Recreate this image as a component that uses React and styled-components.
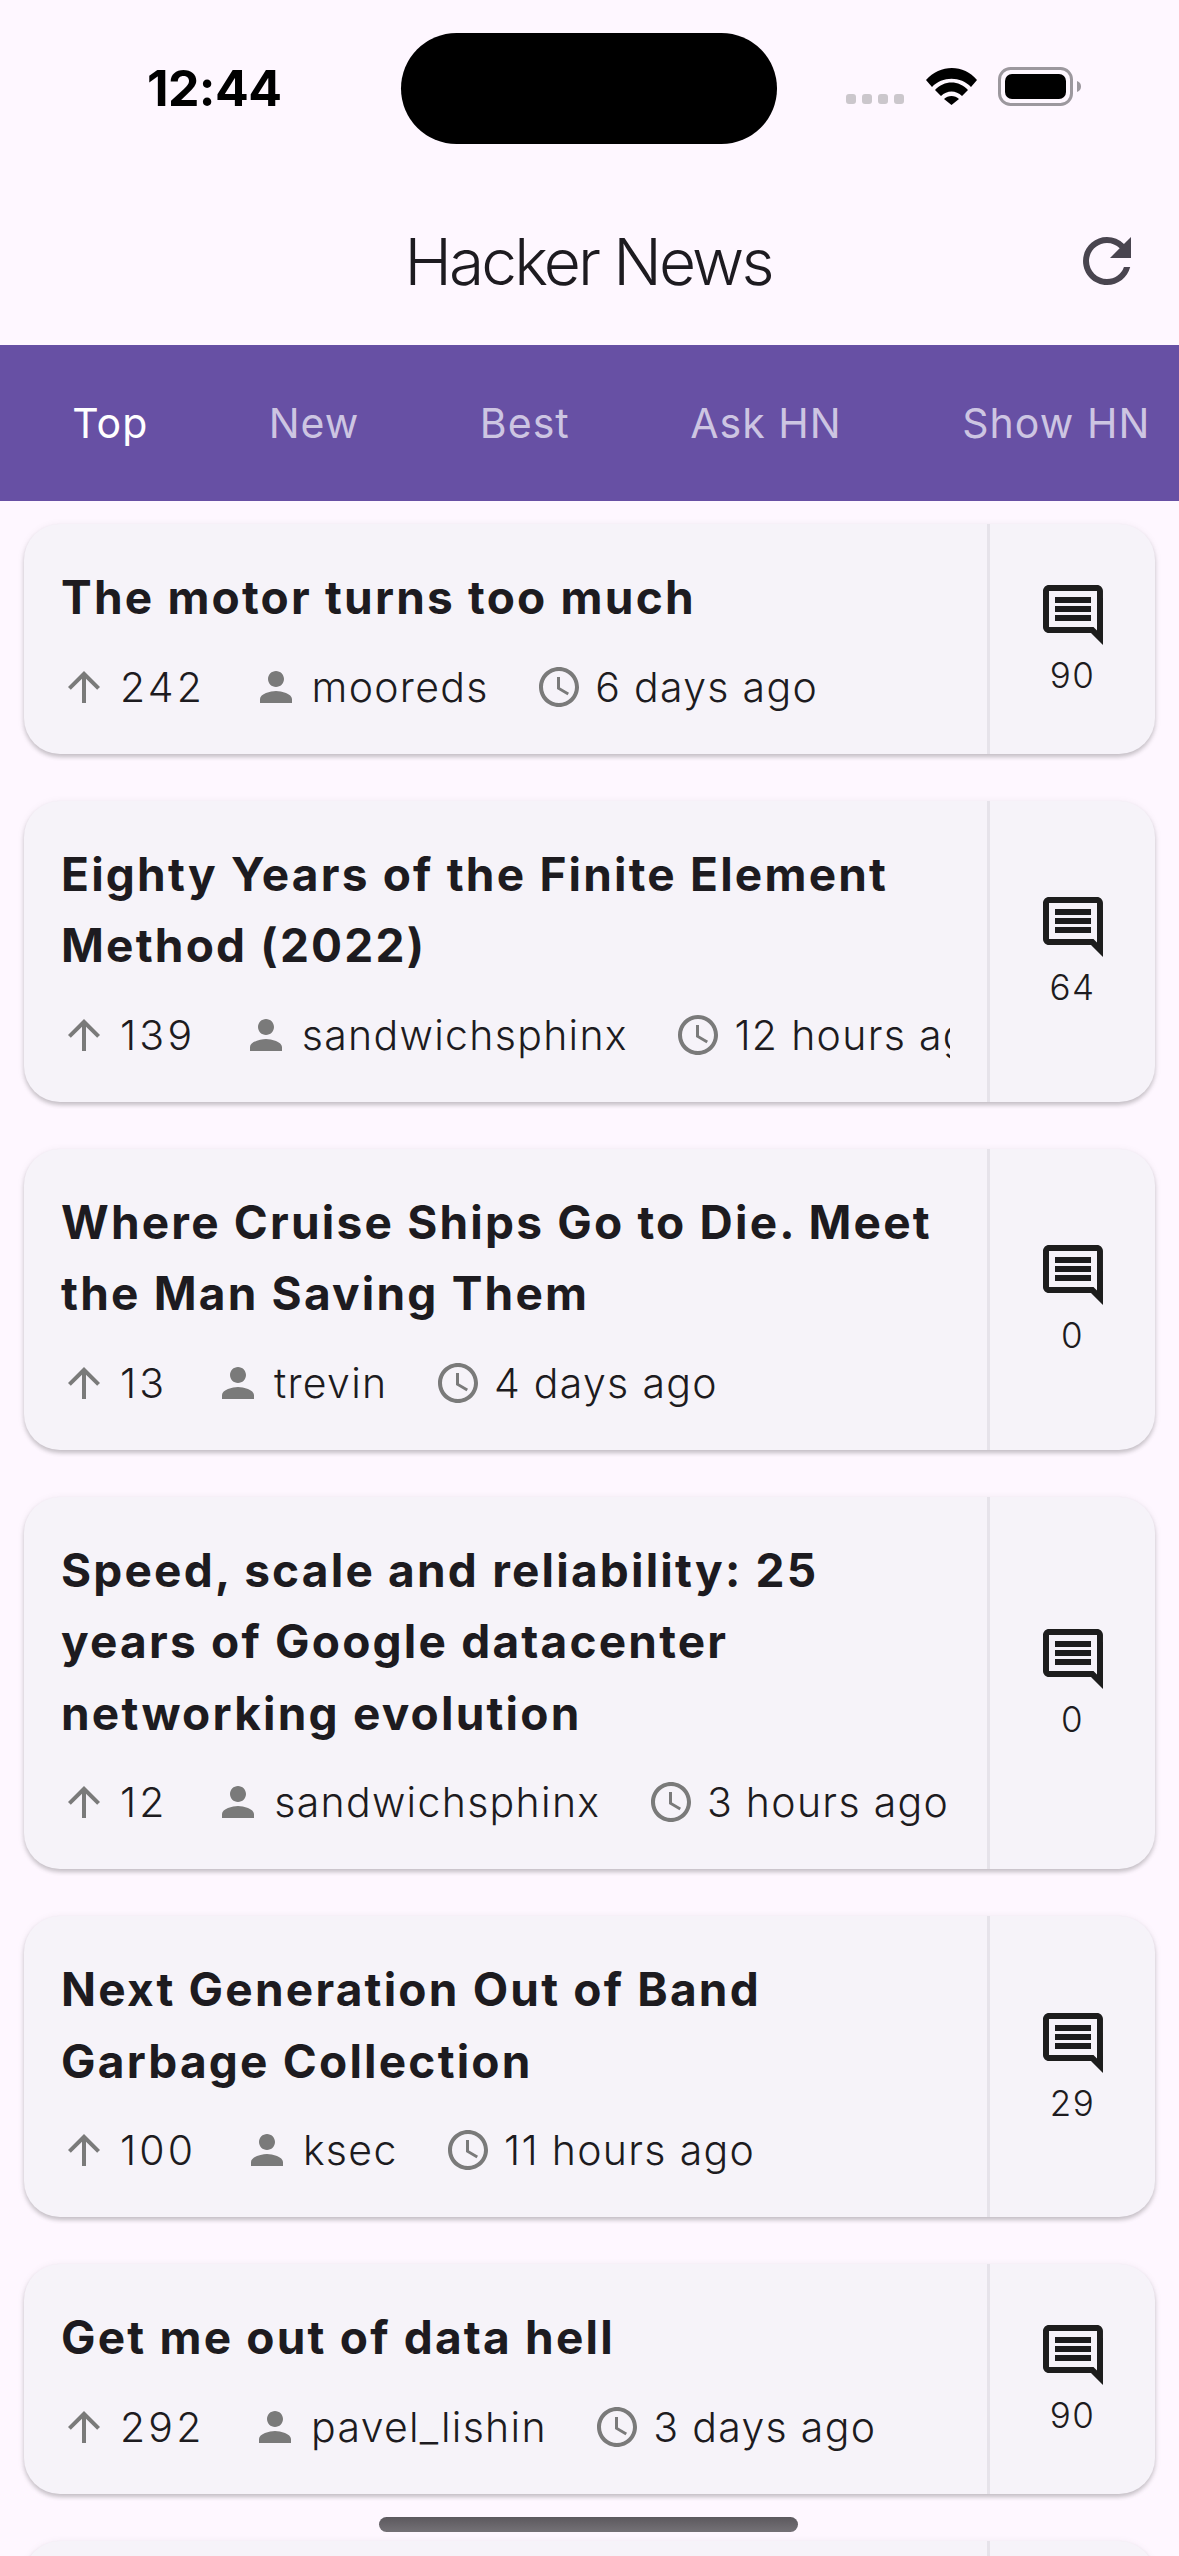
import styled, { createGlobalStyle } from "styled-components"
import { MdArrowUpward, MdPerson, MdAccessTime, MdOutlineComment, MdRefresh } from "react-icons/md"

const GlobalStyle = createGlobalStyle`
  html, body {
    margin: 0;
    height: 2556px;
    overflow: hidden;
    background: #FEF7FF;
  }
`
const Page = styled.div`
  width: 1179px;
  height: 2556px;
  overflow: hidden;
  position: relative;
  background: #FEF7FF;
  font-family: Inter, Roboto, sans-serif;
  color: #1D1B20;
`
const StatusBar = styled.div`
  height: 177px;
  box-sizing: border-box;
  padding-top: 33px;
  display: grid;
  grid-template-columns: 401px 376px 1fr;
  grid-template-rows: 111px;
`
const Clock = styled.div`
  padding: 30px 0 0 147px;
  font-weight: 700;
  font-size: 50px;
  line-height: 51px;
  letter-spacing: -0.6px;
  color: #000;
`
const Notch = styled.div`
  background: #000;
  border-radius: 56px;
`
const StatusIcons = styled.div`
  padding: 34px 0 0 69px;
`
const Toolbar = styled.header`
  height: 168px;
  display: grid;
  grid-template-columns: 1fr auto 1fr;
  align-items: center;
`
const AppTitle = styled.h1`
  grid-column: 2;
  margin: 0;
  padding: 2px 3px 0 0;
  font-weight: 350;
  font-size: 64px;
  line-height: 84px;
  letter-spacing: -2.85px;
`
const ToolbarAction = styled.div`
  justify-self: end;
  display: flex;
  padding-right: 36px;
  color: #49454F;
`
const Tabs = styled.nav`
  height: 156px;
  background: #6750A4;
  display: flex;
  align-items: center;
  padding-left: 12px;
  overflow: hidden;
`
const Tab = styled.div`
  flex: none;
  padding: 0 60.2px;
  font-size: 41px;
  font-weight: 400;
  letter-spacing: 1.05px;
  color: ${(props) => (props.$active ? "#FFFFFF" : "#CDC5E2")};
`
const List = styled.main`
  display: flex;
  flex-direction: column;
  gap: 47px;
  padding: 23px 24px 0 24px;
`
const Card = styled.article`
  display: flex;
  flex: none;
  background: #F6F3F9;
  border-radius: 36px;
  box-shadow: 0 3px 4px rgba(0, 0, 0, 0.2), 0 1px 9px rgba(0, 0, 0, 0.06);
  overflow: hidden;
`
const CardBody = styled.div`
  flex: 1;
  min-width: 0;
  padding: 38px 37px 36px 36px;
  border-right: 3px solid #E6E3EA;
`
const CardTitle = styled.h2`
  margin: 0 0 22px 1px;
  font-size: 46px;
  line-height: 71.5px;
  font-weight: 650;
  letter-spacing: 2.2px;
  color: #1D1B20;
`
const Meta = styled.div`
  display: flex;
  align-items: center;
  gap: 46.5px;
  white-space: nowrap;
  overflow: hidden;
  height: 62px;
`
const MetaItem = styled.span`
  display: flex;
  align-items: center;
  flex: none;
  gap: 12px;
  font-size: 41px;
  font-weight: 350;
  letter-spacing: 1.3px;
  color: #1D1B20;
  svg {
    color: #7A7A7A;
    flex: none;
  }
`
const Points = styled.span`
  letter-spacing: 3.2px;
`
const CommentBox = styled.div`
  flex: none;
  width: 165px;
  display: flex;
  flex-direction: column;
  align-items: center;
  justify-content: center;
  color: #1D1D1D;
`
const CommentCount = styled.span`
  font-size: 35px;
  font-weight: 350;
  line-height: 48px;
  letter-spacing: 1.5px;
  color: #1D1B20;
`
const HomeBar = styled.div`
  position: absolute;
  left: 379px;
  top: 2517px;
  width: 419px;
  height: 15px;
  border-radius: 8px;
  background: linear-gradient(#5C595E, #747176);
`

const stories = [
  { title: "The motor turns too much", points: 242, user: "mooreds", time: "6 days ago", comments: 90 },
  { title: "Eighty Years of the Finite Element Method (2022)", points: 139, user: "sandwichsphinx", time: "12 hours ago", comments: 64 },
  { title: "Where Cruise Ships Go to Die. Meet the Man Saving Them", points: 13, user: "trevin", time: "4 days ago", comments: 0 },
  { title: "Speed, scale and reliability: 25 years of Google datacenter networking evolution", points: 12, user: "sandwichsphinx", time: "3 hours ago", comments: 0 },
  { title: "Next Generation Out of Band Garbage Collection", points: 100, user: "ksec", time: "11 hours ago", comments: 29 },
  { title: "Get me out of data hell", points: 292, user: "pavel_lishin", time: "3 days ago", comments: 90 },
  { title: "", points: "", user: "", time: "", comments: "" },
]

const tabs = ["Top", "New", "Best", "Ask HN", "Show HN"]

function StatusGlyphs() {
  return (
    <svg width="240" height="44" viewBox="0 0 240 44">
      <g fill="#CBC7CC">
        <rect x="0" y="27" width="10" height="10" rx="3" />
        <rect x="16" y="27" width="10" height="10" rx="3" />
        <rect x="32" y="27" width="10" height="10" rx="3" />
        <rect x="48" y="27" width="10" height="10" rx="3" />
      </g>
      <g fill="#000">
        <path d="M80 13 C94 -3 118 -3 131 13 L125 20 C115 9 96 9 86 20 Z" />
        <path d="M89 23 C98 13 113 13 122 23 L116 29 C110 23 101 23 95 29 Z" />
        <path d="M98 32 C102 28 109 28 113 32 L105.500 38 Z" />
      </g>
      <rect x="153.500" y="1.500" width="72" height="36" rx="11" fill="none" stroke="#9C989E" strokeWidth="3" />
      <rect x="159" y="7" width="61" height="25" rx="7" fill="#000" />
      <path d="M231 14 C234 15 235 17 235 19.500 C235 22 234 24 231 25 Z" fill="#9C989E" />
    </svg>
  )
}

function Story({ story }) {
  return (
    <Card>
      <CardBody>
        <CardTitle>{story.title || "\u00A0"}</CardTitle>
        <Meta>
          <MetaItem><MdArrowUpward size={48} /><Points>{story.points}</Points></MetaItem>
          <MetaItem><MdPerson size={48} />{story.user}</MetaItem>
          <MetaItem><MdAccessTime size={48} />{story.time}</MetaItem>
        </Meta>
      </CardBody>
      <CommentBox>
        <MdOutlineComment size={72} />
        <CommentCount>{story.comments}</CommentCount>
      </CommentBox>
    </Card>
  )
}

function App() {
  return (
    <Page>
      <GlobalStyle />
      <StatusBar>
        <Clock>12:44</Clock>
        <Notch />
        <StatusIcons><StatusGlyphs /></StatusIcons>
      </StatusBar>
      <Toolbar>
        <AppTitle>Hacker News</AppTitle>
        <ToolbarAction><MdRefresh size={72} /></ToolbarAction>
      </Toolbar>
      <Tabs>
        {tabs.map((tab, i) => (
          <Tab key={tab} $active={i === 0}>{tab}</Tab>
        ))}
      </Tabs>
      <List>
        {stories.map((story, i) => (
          <Story key={i} story={story} />
        ))}
      </List>
      <HomeBar />
    </Page>
  )
}

export default App
